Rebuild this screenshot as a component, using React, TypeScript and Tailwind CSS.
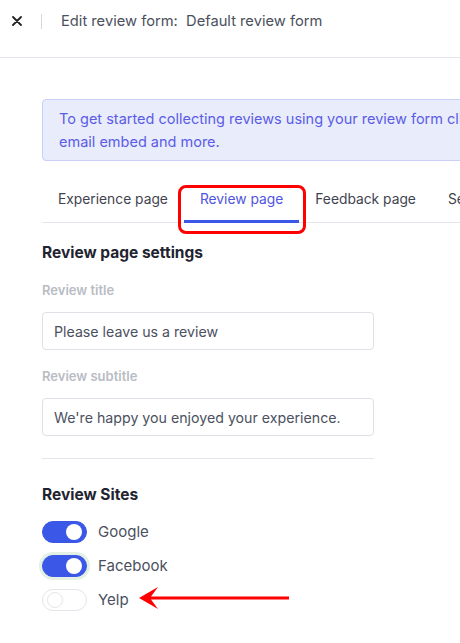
import { useState } from "react";

const font = { fontFamily: "Inter, 'Noto Sans', sans-serif" };

function Toggle({ on, ring, onClick }: { on: boolean; ring?: boolean; onClick: () => void }) {
  return (
    <button
      onClick={onClick}
      className={
        "relative h-[22px] w-[45px] shrink-0 rounded-full border " +
        (on ? "border-[#3b57e8] bg-[#3b57e8]" : "border-[#e3e5ea] bg-white") +
        (ring ? " shadow-[0_0_0_3px_#e4f0e4]" : "")
      }
    >
      <span
        className={
          "absolute top-1/2 h-[16px] w-[16px] -translate-y-1/2 rounded-full " +
          (on ? "right-[4px] bg-white" : "left-[4px] border border-[#e3e5ea] bg-white")
        }
      />
    </button>
  );
}

export default function App() {
  const [sites, setSites] = useState({ Google: true, Facebook: true, Yelp: false });
  const tabs = ["Experience page", "Review page", "Feedback page", "Settings"];

  return (
    <div className="h-[643px] w-[460px] overflow-hidden bg-white" style={font}>
      {/* header */}
      <div className="flex h-[58px] items-start border-b border-[#e6e7ec] pt-[12px]">
        <div className="flex h-[18px] w-[41px] items-center pl-[12px]">
          <svg width="10" height="10" viewBox="0 0 10 10" className="text-[#222]">
            <path d="M1 1L9 9M9 1L1 9" stroke="currentColor" strokeWidth="1.8" strokeLinecap="round" />
          </svg>
        </div>
        <div className="mt-[2px] h-[15px] w-px bg-[#d5d7dd]" />
        <div className="ml-[19px] whitespace-pre text-[14.7px] leading-[18px] text-[#4b505c]">
          Edit review form:  Default review form
        </div>
      </div>

      <div className="pl-[42px]">
        {/* banner */}
        <div className="mt-[41px] w-[600px] rounded-[4px] border border-[#c9cff6] bg-[#e9ecfb] py-[7px] pl-[16px] text-[14.5px] leading-[23px] text-[#5b5ce6]">
          <div className="whitespace-nowrap">To get started collecting reviews using your review form click Share to access the link,</div>
          <div>email embed and more.</div>
        </div>

        {/* tabs */}
        <div className="mt-[17px] flex w-[600px] border-b border-[#e6e7ec]">
          {tabs.map((t) => {
            const active = t === "Review page";
            return (
              <div key={t} className="relative -mb-px">
                <div
                  className={
                    "whitespace-nowrap border-b-[3px] px-4 pt-[11px] pb-[11px] text-[13.8px] leading-[20px] " +
                    (active ? "border-[#3b57e8] text-[#4f55e0]" : "border-transparent text-[#3f4350]")
                  }
                >
                  {t}
                </div>
                {active && (
                  <div className="pointer-events-none absolute left-[-6px] top-[7px] h-[49px] w-[128px] rounded-[8px] border-[3px] border-[#f00]" />
                )}
              </div>
            );
          })}
        </div>

        <div className="w-[332px]">
          <div className="mt-[20px] text-[15.5px] font-bold leading-[20px] text-[#1f2430]">Review page settings</div>

          <div className="mt-[18px] text-[13px] font-semibold leading-[18px] text-[#b9bcc4]">Review title</div>
          <input
            defaultValue="Please leave us a review"
            className="mt-[13px] h-[38px] w-full rounded-[4px] border border-[#dfe1e6] px-[11px] text-[14.2px] text-[#4b5060] outline-none"
            style={font}
          />

          <div className="mt-[17px] text-[13px] font-semibold leading-[18px] text-[#b9bcc4]">Review subtitle</div>
          <input
            defaultValue="We're happy you enjoyed your experience."
            className="mt-[13px] h-[38px] w-full rounded-[4px] border border-[#dfe1e6] px-[11px] text-[14.2px] text-[#4b5060] outline-none"
            style={font}
          />

          <div className="mt-[22px] h-px bg-[#e3e5ea]" />

          <div className="mt-[26px] text-[15.5px] font-bold leading-[20px] text-[#1f2430]">Review Sites</div>

          <div className="mt-[16px] flex flex-col gap-[12px]">
            {(Object.keys(sites) as (keyof typeof sites)[]).map((s) => (
              <div key={s} className="relative flex items-center gap-[11px]">
                <Toggle
                  on={sites[s]}
                  ring={s === "Facebook"}
                  onClick={() => setSites({ ...sites, [s]: !sites[s] })}
                />
                <span className="text-[15px] leading-[20px] text-[#4b5060]">{s}</span>
                {s === "Yelp" && (
                  <svg width="156" height="24" viewBox="0 0 156 24" className="absolute left-[94px] top-[-3px]">
                    <path d="M3 12L22 1L15 10.5L153 10.5L153 13.5L15 13.5L22 23Z" fill="#f00" />
                  </svg>
                )}
              </div>
            ))}
          </div>
        </div>
      </div>
    </div>
  );
}
